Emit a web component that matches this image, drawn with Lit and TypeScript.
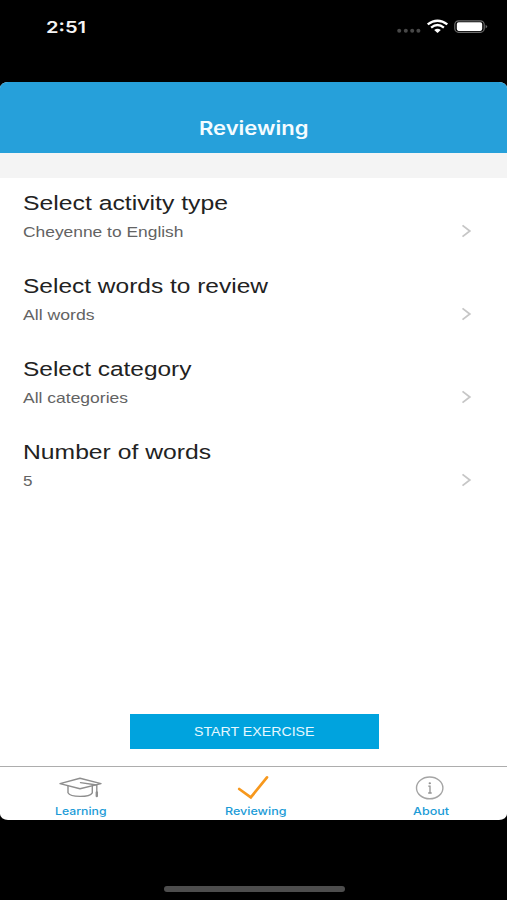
import { LitElement, html, css, svg } from "lit";
import { customElement, property } from "lit/decorators.js";

@customElement("wide-text")
class WideText extends LitElement {
  @property() text = "";
  @property({ type: Number }) width = 100;
  @property({ type: Number }) height = 20;
  @property({ type: Number }) baseline = 15;
  static styles = css`
    :host { display: block; }
    svg { display: block; overflow: visible; }
    text { fill: currentColor; }
  `;
  render() {
    return html`<svg width=${this.width} height=${this.height}>
      ${svg`<text x="0" y=${this.baseline} textLength=${this.width} lengthAdjust="spacingAndGlyphs">${this.text}</text>`}
    </svg>`;
  }
}

const rows = [
  { title: "Select activity type", tw: 205, value: "Cheyenne to English", vw: 160.5 },
  { title: "Select words to review", tw: 245, value: "All words", vw: 71.5 },
  { title: "Select category", tw: 168.5, value: "All categories", vw: 105 },
  { title: "Number of words", tw: 188, value: "5", vw: 9.5 },
];

const capIcon = svg`<g fill="none" stroke="#8e8e8e" stroke-width="1.4" stroke-linejoin="round" stroke-linecap="round">
  <path d="M9 7.6 L29 2.2 L50 7.6 L29 12.8 Z"/>
  <path d="M17 10 V16.8 C19.5 21.6 38.5 21.6 41.3 16.8 V10"/>
  <path d="M29.5 6.6 L45.8 9 V19.2"/>
  <path d="M45.8 16.4 V20" stroke-width="2.4"/></g>`;
const checkIcon = svg`<path d="M13.2 13 L24.8 21.4 L41 1.4" fill="none" stroke="#f7981d" stroke-width="2.7" stroke-linejoin="miter" stroke-linecap="round"/>`;
const infoIcon = svg`<ellipse cx="28.7" cy="11.9" rx="13.2" ry="10.9" fill="none" stroke="#a5a5a5" stroke-width="1.4"/>
  <ellipse cx="28.8" cy="7.2" rx="1.2" ry="1" fill="#929292"/>
  <path d="M27.3 10.2 H29 V17 M27.2 17 H30.7" fill="none" stroke="#929292" stroke-width="1.3"/>`;

const tabs = [
  { label: "Learning", w: 51.5, icon: capIcon },
  { label: "Reviewing", w: 61.5, icon: checkIcon },
  { label: "About", w: 36, icon: infoIcon },
];

@customElement("app-root")
class AppRoot extends LitElement {
  static styles = css`
    :host {
      display: flex; flex-direction: column; width: 507px; height: 900px;
      background: #000; overflow: hidden;
      font-family: "Liberation Sans", Arial, sans-serif;
    }
    .status {
      height: 82px; flex: none; box-sizing: border-box; color: #f4f4f4;
      padding: 18px 19px 0 45.5px; display: flex; justify-content: space-between; align-items: flex-start;
    }
    .time { font: 600 16.5px Inter, sans-serif; }
    .card {
      height: 738px; flex: none; background: #fff; overflow: hidden;
      border-radius: 8px / 6px; display: flex; flex-direction: column;
    }
    header {
      height: 71px; flex: none; box-sizing: border-box; padding-top: 34px; background: #26a0da; color: #f4fcff;
      display: flex; justify-content: center; font: 600 18.5px Inter, sans-serif;
    }
    .strip { height: 25px; flex: none; background: #f4f4f4; }
    .row {
      height: 83px; flex: none; box-sizing: border-box; padding: 12px 35px 0 23px;
      display: flex; justify-content: space-between; align-items: flex-start;
    }
    .title { font-size: 20.5px; color: #222; }
    .value { font-size: 14.5px; color: #636363; }
    .chevron { margin-top: 34px; }
    .spacer { flex: 1; }
    button {
      all: unset; box-sizing: border-box; width: 248.5px; height: 35px; margin: 0 0 17px 130px; flex: none;
      background: #00a3de; color: #e6f8ff; display: flex; justify-content: center; font-size: 13px;
    }
    nav {
      height: 54px; flex: none; box-sizing: border-box; border-top: 1.4px solid #adadad;
      padding: 9px 46px 0 51px; display: flex; justify-content: space-between;
    }
    .tab {
      width: 60px; display: flex; flex-direction: column; align-items: center;
      font: 500 11px Inter, sans-serif; color: #1b9bd7;
    }
    .icon { display: block; overflow: visible; }
    .home { width: 180.5px; height: 6px; border-radius: 3px; background: #4d4d4d; margin: 65.5px 0 0 164px; flex: none; }
  `;

  render() {
    return html`
      <div class="status">
        <wide-text class="time" text="2:51" width="40" height="20" baseline="14.7"></wide-text>
        <svg width="92" height="20">
          <g fill="#484848">
            <circle cx="3.2" cy="12.8" r="2"/><circle cx="9.8" cy="12.8" r="2"/>
            <circle cx="16.2" cy="12.8" r="2"/><circle cx="22.4" cy="12.8" r="2"/>
          </g>
          <g fill="none" stroke="#fff" stroke-width="2.4">
            <path d="M31.7 6.4 Q41.5 -1 51.3 6.4"/><path d="M35.1 9.6 Q41.5 4.6 47.9 9.6"/>
          </g>
          <path d="M38.2 12 Q41.5 9.4 44.8 12 L41.5 14.9 Z" fill="#fff"/>
          <rect x="58.8" y="2.8" width="29.4" height="11.5" rx="3.8" fill="none" stroke="#6c6c6c" stroke-width="1.2"/>
          <rect x="60.8" y="4.3" width="25.4" height="8.6" rx="1.8" fill="#fff"/>
          <path d="M89.6 6.7 Q92.8 8.5 89.6 10.4 Z" fill="#6c6c6c"/>
        </svg>
      </div>
      <div class="card">
        <header><wide-text text="Reviewing" width="109.5" height="25" baseline="19"></wide-text></header>
        <div class="strip"></div>
        ${rows.map((r) => html`
          <div class="row">
            <div>
              <wide-text class="title" .text=${r.title} .width=${r.tw} .height=${27} .baseline=${20}></wide-text>
              <wide-text class="value" .text=${r.value} .width=${r.vw} .height=${25} .baseline=${20}></wide-text>
            </div>
            <svg class="chevron" width="12" height="14">
              <path d="M2.5 1.4 L9.8 7 L2.5 12.6" fill="none" stroke="#c6c6c6" stroke-width="1.8"/>
            </svg>
          </div>`)}
        <div class="spacer"></div>
        <button><wide-text text="START EXERCISE" width="120.5" height="35" baseline="22"></wide-text></button>
        <nav>
          ${tabs.map((t) => html`
            <div class="tab">
              <svg class="icon" width="60" height="24">${t.icon}</svg>
              <wide-text .text=${t.label} .width=${t.w} .height=${18} .baseline=${14.5}></wide-text>
            </div>`)}
        </nav>
      </div>
      <div class="home"></div>
    `;
  }
}
